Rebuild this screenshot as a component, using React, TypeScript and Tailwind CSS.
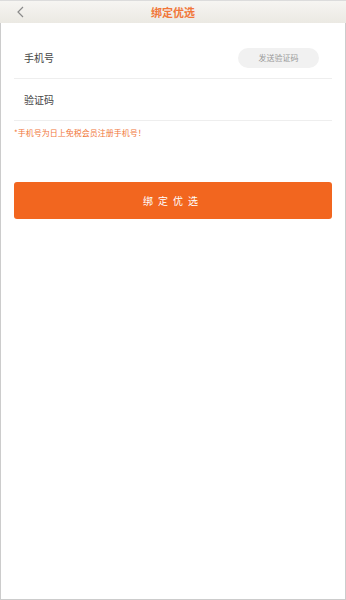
export default function App() {
  return (
    <div className="flex h-[600px] w-[346px] flex-col bg-white font-['Noto_Sans_CJK_SC','Noto_Sans',sans-serif]">
      <header className="relative flex h-[23px] shrink-0 items-center justify-center border-t border-[#dcdcdc] bg-gradient-to-b from-[#f6f5f2] to-[#ebe9e3]">
        <svg className="absolute left-[16px] top-[5px]" width="9" height="12" viewBox="0 0 9 12" fill="none">
          <path d="M7 1 L2 6 L7 11" stroke="#8a8a8a" strokeWidth="1.2" />
        </svg>
        <h1 className="text-[11px] font-bold leading-none text-[#f1773a]">绑定优选</h1>
      </header>

      <main className="flex flex-1 flex-col border-x border-b border-[#cccccc] pt-[14px]">
        <div className="mx-[13px] flex h-[42px] items-center justify-between border-b border-[#eeeeee] pl-[10px] pr-[13px]">
          <span className="text-[10px] text-[#444444]">手机号</span>
          <button className="flex h-[20px] w-[81px] items-center justify-center rounded-full bg-[#f1f1f1] text-[8px] text-[#999999]">
            发送验证码
          </button>
        </div>
        <div className="mx-[13px] flex h-[42px] items-center border-b border-[#eeeeee] pl-[10px]">
          <span className="text-[10px] text-[#444444]">验证码</span>
        </div>

        <p className="mx-[13px] mt-[6px] text-[8px] leading-[12px] text-[#f1773a]">*手机号为日上免税会员注册手机号！</p>

        <button className="mx-[13px] mt-[43px] flex h-[37px] items-center justify-center rounded-[3px] bg-[#f2661f] text-[10px] tracking-[5px] text-white">
          绑定优选
        </button>
      </main>
    </div>
  );
}
